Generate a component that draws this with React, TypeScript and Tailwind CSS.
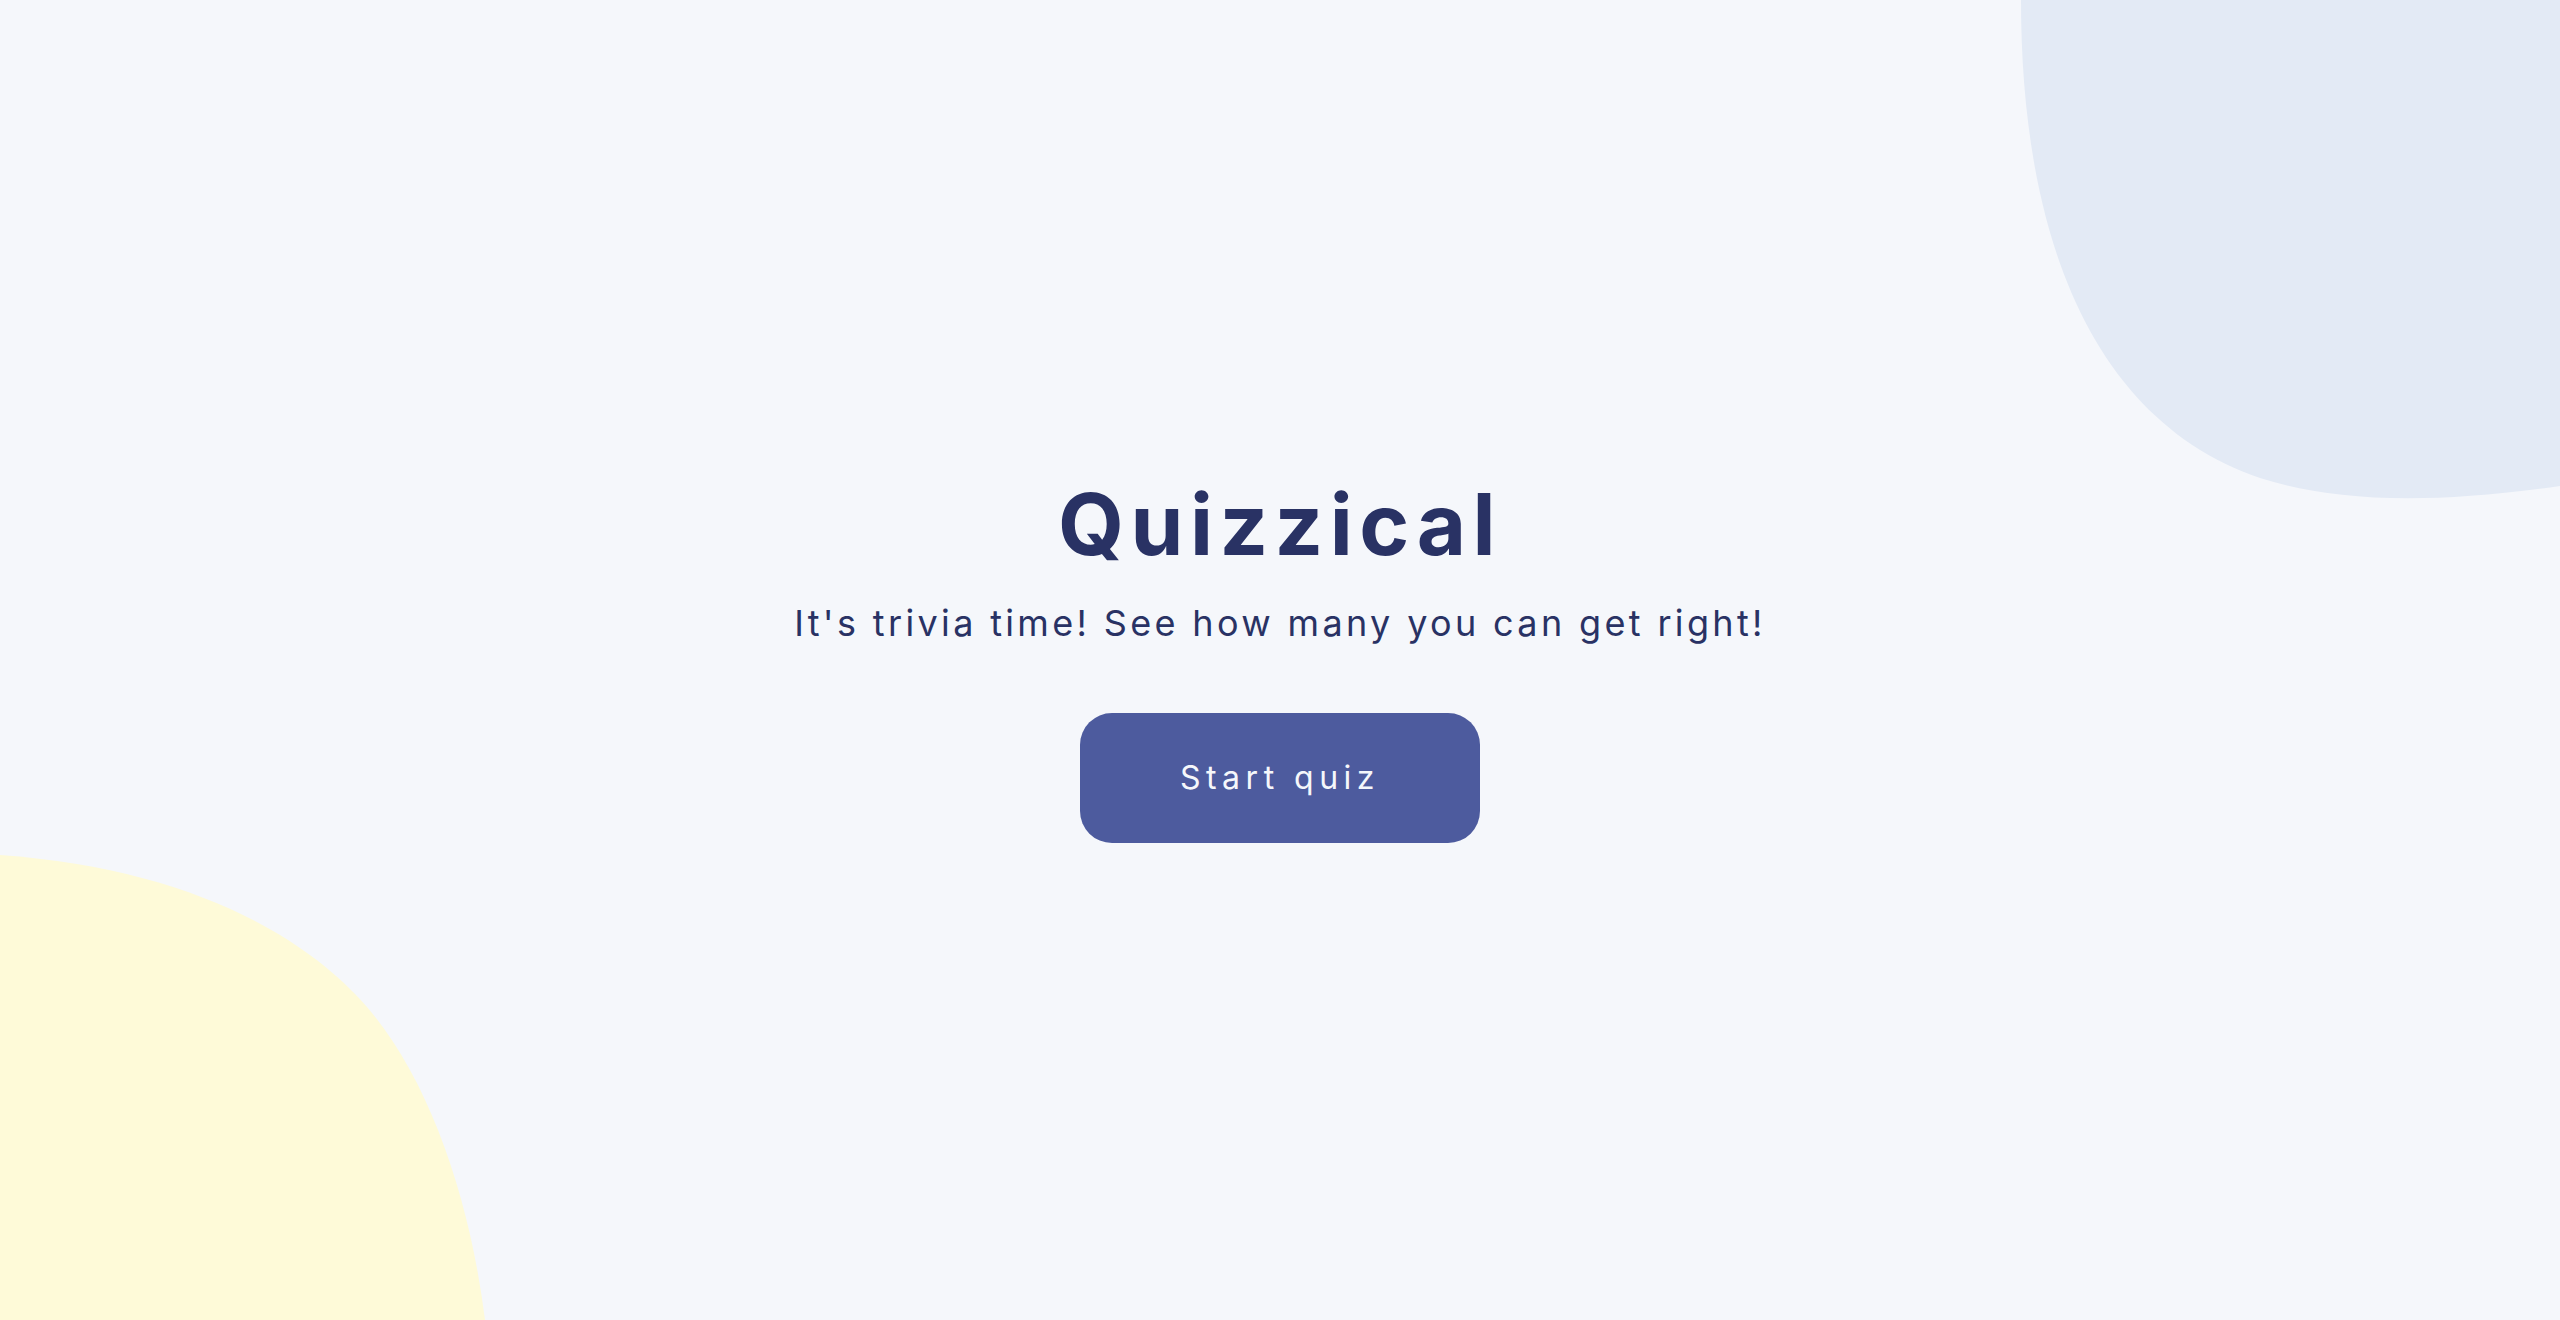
const App = () => {
  return (
    <div className="relative flex h-screen w-full items-center justify-center overflow-hidden bg-[#f5f7fb] font-['Inter',sans-serif]">
      {/* Decorative blobs */}
      <svg
        className="pointer-events-none absolute right-0 top-0 h-[510px] w-[540px]"
        viewBox="2020 0 540 510"
        preserveAspectRatio="none"
      >
        <path
          d="M2021,0 C2021,250 2100,424 2260,478 C2330,500 2420,506 2560,486 L2560,0 Z"
          fill="#e3eaf5"
        />
      </svg>
      <svg
        className="pointer-events-none absolute bottom-0 left-0 h-[470px] w-[490px]"
        viewBox="0 850 490 470"
        preserveAspectRatio="none"
      >
        <path
          d="M0,855 C180,868 300,930 367,1007 C430,1080 470,1200 485,1320 L0,1320 Z"
          fill="#fefad8"
        />
      </svg>

      {/* Main Content */}
      <main className="relative flex flex-col items-center pt-[4px] text-[#293264]">
        <h1 className="text-[85px] font-bold leading-none tracking-[6.5px]">Quizzical</h1>
        <p className="mt-[38px] text-[36px] leading-none tracking-[3.35px]">
          It's trivia time! See how many you can get right!
        </p>
        <button className="mt-[72px] flex h-[130px] w-[400px] items-center justify-center rounded-[32px] bg-[#4d5b9e] text-[32px] tracking-[5.5px] text-[#f5f7fb]">
          Start quiz
        </button>
      </main>
    </div>
  );
};

export default App;
